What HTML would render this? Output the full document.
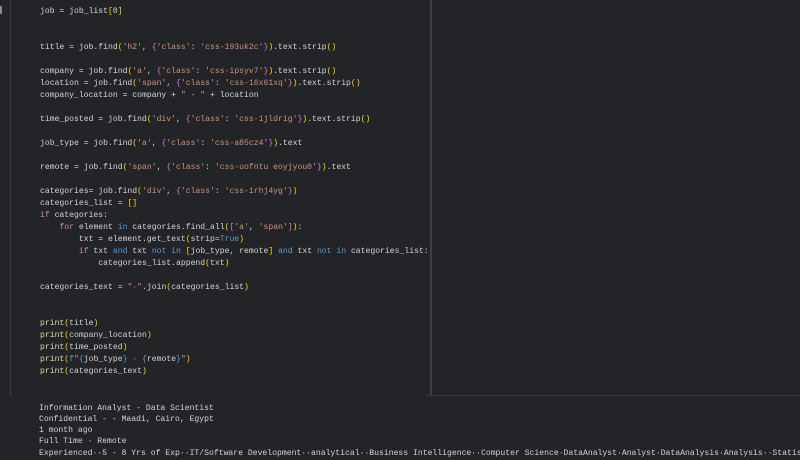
<!DOCTYPE html>
<html><head><meta charset="utf-8"><style>
html,body{margin:0;padding:0;width:800px;height:460px;overflow:hidden;background:#232427;}
.code{position:absolute;left:40px;top:5.5px;font-family:"Liberation Mono",monospace;font-size:8.1px;line-height:12px;color:#d4d4d4;white-space:pre;}
.out{position:absolute;left:39px;top:402.5px;font-family:"Liberation Mono",monospace;font-size:8.1px;line-height:11.3px;color:#d4d4d4;white-space:pre;}
.s{color:#ce9178}.b{color:#ffd700}.p{color:#da70d6}.k{color:#569cd6}.c{color:#c586c0}.f{color:#dcdcaa}
.vl{position:absolute;left:10px;top:0;width:1px;height:396px;background:#3a3b3f;}
.vr{position:absolute;left:430px;top:0;width:2px;height:396px;background:#3e3f43;}
.hr{position:absolute;left:425px;top:395px;width:375px;height:1px;background:#35363a;}
.mk{position:absolute;left:0;top:6px;width:2px;height:8px;background:#8a8a8a;}
</style></head><body>
<div class="mk"></div><div class="vl"></div><div class="vr"></div><div class="hr"></div>
<div class="code">job = job_list<span class="b">[</span>0<span class="b">]</span>


title = job.find<span class="b">(</span><span class="s">'h2'</span>, <span class="p">{</span><span class="s">'class'</span>: <span class="s">'css-193uk2c'</span><span class="p">}</span><span class="b">)</span>.text.strip<span class="b">()</span>

company = job.find<span class="b">(</span><span class="s">'a'</span>, <span class="p">{</span><span class="s">'class'</span>: <span class="s">'css-ipsyv7'</span><span class="p">}</span><span class="b">)</span>.text.strip<span class="b">()</span>
location = job.find<span class="b">(</span><span class="s">'span'</span>, <span class="p">{</span><span class="s">'class'</span>: <span class="s">'css-16x61xq'</span><span class="p">}</span><span class="b">)</span>.text.strip<span class="b">()</span>
company_location = company + <span class="s">" - "</span> + location

time_posted = job.find<span class="b">(</span><span class="s">'div'</span>, <span class="p">{</span><span class="s">'class'</span>: <span class="s">'css-1jldrig'</span><span class="p">}</span><span class="b">)</span>.text.strip<span class="b">()</span>

job_type = job.find<span class="b">(</span><span class="s">'a'</span>, <span class="p">{</span><span class="s">'class'</span>: <span class="s">'css-a85cz4'</span><span class="p">}</span><span class="b">)</span>.text

remote = job.find<span class="b">(</span><span class="s">'span'</span>, <span class="p">{</span><span class="s">'class'</span>: <span class="s">'css-uofntu eoyjyou0'</span><span class="p">}</span><span class="b">)</span>.text

categories= job.find<span class="b">(</span><span class="s">'div'</span>, <span class="p">{</span><span class="s">'class'</span>: <span class="s">'css-1rhj4yg'</span><span class="p">}</span><span class="b">)</span>
categories_list = <span class="b">[]</span>
<span class="c">if</span> categories:
    <span class="c">for</span> element <span class="k">in</span> categories.find_all<span class="b">(</span><span class="p">[</span><span class="s">'a'</span>, <span class="s">'span'</span><span class="p">]</span><span class="b">)</span>:
        txt = element.get_text<span class="b">(</span>strip=<span class="k">True</span><span class="b">)</span>
        <span class="c">if</span> txt <span class="k">and</span> txt <span class="k">not in</span> <span class="b">[</span>job_type, remote<span class="b">]</span> <span class="k">and</span> txt <span class="k">not in</span> categories_list:
            categories_list.append<span class="b">(</span>txt<span class="b">)</span>

categories_text = <span class="s">"·"</span>.join<span class="b">(</span>categories_list<span class="b">)</span>


<span class="f">print</span><span class="b">(</span>title<span class="b">)</span>
<span class="f">print</span><span class="b">(</span>company_location<span class="b">)</span>
<span class="f">print</span><span class="b">(</span>time_posted<span class="b">)</span>
<span class="f">print</span><span class="b">(</span><span class="k">f</span><span class="s">"</span><span class="k">{</span>job_type<span class="k">}</span><span class="s"> · </span><span class="k">{</span>remote<span class="k">}</span><span class="s">"</span><span class="b">)</span>
<span class="f">print</span><span class="b">(</span>categories_text<span class="b">)</span></div>
<div class="out">Information Analyst - Data Scientist
Confidential - - Maadi, Cairo, Egypt
1 month ago
Full Time · Remote
Experienced··5 - 8 Yrs of Exp··IT/Software Development··analytical··Business Intelligence··Computer Science·DataAnalyst·Analyst·DataAnalysis·Analysis··Statistics</div>
</body></html>
